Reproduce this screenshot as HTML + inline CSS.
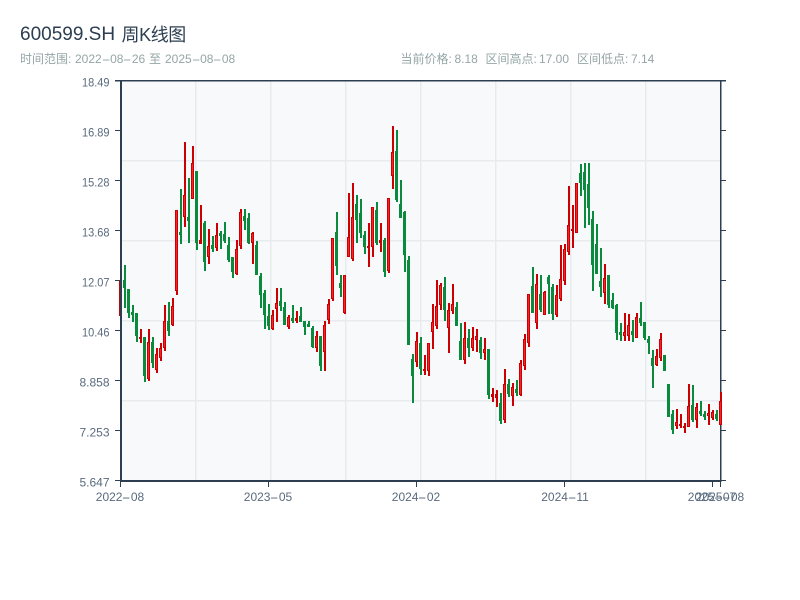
<!DOCTYPE html>
<html lang="zh">
<head>
<meta charset="utf-8">
<title>600599.SH 周K线图</title>
<style>
html,body{margin:0;padding:0;background:#fff;}
body{width:800px;height:600px;overflow:hidden;position:relative;font-family:"Liberation Sans","WenQuanYi Zen Hei","Noto Sans CJK SC",sans-serif;}
.t{position:absolute;white-space:pre;line-height:1;}
.h{top:25px;color:#2c3e50;}
.s{top:53px;font-size:12px;color:#95a5a6;}
.x{top:491px;width:80px;text-align:center;font-size:12px;color:#5a6a7e;}
i{font-style:normal;display:inline-block;width:8.4px;text-align:center;transform:scaleX(2.2);}
svg{position:absolute;left:0;top:0;}
svg text{font-family:"Liberation Sans","WenQuanYi Zen Hei","Noto Sans CJK SC",sans-serif;font-size:12px;fill:#5a6a7e;}
</style>
</head>
<body>
<div class="t h" style="left:20px;font-size:19px">600599.SH</div>
<div class="t h" style="left:121.5px;font-size:18px;top:26px;letter-spacing:-.4px">周K线图</div>
<div class="t s" style="left:20px">时间范围:</div>
<div class="t s" style="left:75px">2022<i>-</i>08<i>-</i>26</div>
<div class="t s" style="left:149px">至</div>
<div class="t s" style="left:165px">2025<i>-</i>08<i>-</i>08</div>
<div class="t s" style="left:400.5px">当前价格:</div>
<div class="t s" style="left:454.5px">8.18</div>
<div class="t s" style="left:485.5px">区间高点:</div>
<div class="t s" style="left:539px">17.00</div>
<div class="t s" style="left:577px">区间低点:</div>
<div class="t s" style="left:631px">7.14</div>
<svg width="800" height="600" viewBox="0 0 800 600">
<rect x="120" y="80" width="600" height="400" fill="#f8f9fb"/>
<path fill="#e7eaee" d="M195 81h1.5V480h-1.5zM270 81h1.5V480h-1.5zM345 81h1.5V480h-1.5zM420 81h1.5V480h-1.5zM495 81h1.5V480h-1.5zM570 81h1.5V480h-1.5zM645 81h1.5V480h-1.5zM122 160h598v1.5H122zM122 240h598v1.5H122zM122 320h598v1.5H122zM122 400h598v1.5H122z"/>
<g shape-rendering="crispEdges">
<path fill="#2c3e50" d="M115 80h611v1.5H115zM720 80h1.5V482H720zM721 130h5v1h-5zM721 180h5v1h-5zM721 230h5v1h-5zM721 280h5v1h-5zM721 330h5v1h-5zM721 380h5v1h-5zM721 430h5v1h-5zM721 480h5v1h-5z"/>
<path fill="#0a8a3c" d="M124 265h2V308h-2zM123 280h3V288h-3zM128 289h2V318h-2zM127 289h3V313h-3zM132 305h2V322h-2zM131 312h3V315h-3zM136 313h2V342h-2zM135 313h3V336h-3zM144 337h2V382h-2zM143 337h3V376h-3zM152 337h2V368h-2zM151 342h3V363h-3zM168 302h2V336h-2zM167 321h3V331h-3zM180 189h2V244h-2zM179 232h3V235h-3zM188 178h2V243h-2zM187 217h3V221h-3zM196 171h2V250h-2zM195 171h3V243h-3zM204 221h2V271h-2zM203 223h3V262h-3zM212 236h2V252h-2zM211 245h3V249h-3zM220 231h2V249h-2zM219 233h3V236h-3zM224 222h2V243h-2zM223 234h3V241h-3zM228 237h2V262h-2zM227 245h3V260h-3zM232 257h2V278h-2zM231 257h3V272h-3zM244 209h2V230h-2zM243 216h3V221h-3zM248 213h2V244h-2zM247 218h3V243h-3zM256 241h2V275h-2zM255 245h3V275h-3zM260 273h2V308h-2zM259 276h3V295h-3zM264 290h2V329h-2zM263 293h3V315h-3zM268 304h2V330h-2zM267 316h3V326h-3zM280 288h2V311h-2zM279 301h3V306h-3zM284 302h2V325h-2zM283 307h3V325h-3zM292 305h2V323h-2zM291 318h3V321h-3zM300 307h2V322h-2zM299 316h3V322h-3zM304 321h2V335h-2zM303 321h3V327h-3zM308 321h2V327h-2zM307 324h3V327h-3zM312 326h2V348h-2zM311 328h3V347h-3zM320 336h2V371h-2zM319 336h3V366h-3zM336 212h2V275h-2zM335 232h3V266h-3zM340 275h2V297h-2zM339 283h3V288h-3zM356 195h2V243h-2zM355 204h3V220h-3zM360 199h2V238h-2zM359 213h3V233h-3zM364 231h2V254h-2zM363 235h3V247h-3zM376 202h2V245h-2zM375 210h3V243h-3zM384 238h2V277h-2zM383 240h3V272h-3zM396 130h2V202h-2zM395 151h3V200h-3zM400 180h2V218h-2zM399 204h3V218h-3zM404 211h2V272h-2zM403 212h3V255h-3zM408 256h2V345h-2zM407 260h3V345h-3zM412 354h2V403h-2zM411 359h3V376h-3zM420 337h2V375h-2zM419 343h3V369h-3zM444 277h2V321h-2zM443 287h3V310h-3zM456 302h2V326h-2zM455 307h3V326h-3zM460 323h2V360h-2zM459 341h3V360h-3zM468 329h2V357h-2zM467 338h3V348h-3zM480 337h2V359h-2zM479 340h3V353h-3zM488 349h2V399h-2zM487 349h3V395h-3zM500 393h2V424h-2zM499 403h3V421h-3zM508 379h2V397h-2zM507 384h3V394h-3zM516 380h2V396h-2zM515 389h3V393h-3zM532 267h2V313h-2zM531 286h3V313h-3zM540 275h2V312h-2zM539 294h3V310h-3zM548 275h2V314h-2zM547 277h3V284h-3zM552 284h2V320h-2zM551 287h3V314h-3zM580 164h2V196h-2zM579 173h3V183h-3zM584 163h2V228h-2zM583 172h3V190h-3zM588 163h2V225h-2zM587 184h3V208h-3zM592 211h2V291h-2zM591 219h3V265h-3zM596 224h2V274h-2zM595 244h3V274h-3zM600 248h2V297h-2zM599 281h3V287h-3zM608 275h2V308h-2zM607 275h3V305h-3zM612 293h2V309h-2zM611 300h3V308h-3zM616 304h2V340h-2zM615 305h3V333h-3zM620 323h2V341h-2zM619 332h3V335h-3zM632 320h2V342h-2zM631 331h3V335h-3zM640 302h2V326h-2zM639 318h3V323h-3zM644 322h2V340h-2zM643 322h3V338h-3zM648 336h2V354h-2zM647 339h3V343h-3zM652 350h2V388h-2zM651 358h3V366h-3zM664 355h2V371h-2zM663 355h3V371h-3zM668 384h2V417h-2zM667 384h3V417h-3zM672 410h2V434h-2zM671 414h3V430h-3zM692 385h2V422h-2zM691 405h3V420h-3zM700 401h2V416h-2zM699 411h3V414h-3zM704 411h2V420h-2zM703 414h3V417h-3zM716 410h2V421h-2zM715 414h3V419h-3z"/>
<path fill="#cc0000" d="M120 280h2V316h-2zM119 280h3V316h-3zM140 329h2V343h-2zM139 337h3V339h-3zM148 329h2V381h-2zM147 342h3V379h-3zM156 348h2V373h-2zM155 354h3V370h-3zM160 343h2V361h-2zM159 348h3V358h-3zM164 305h2V351h-2zM163 321h3V348h-3zM172 298h2V326h-2zM171 306h3V325h-3zM176 210h2V295h-2zM175 210h3V291h-3zM184 142h2V227h-2zM183 195h3V217h-3zM192 146h2V199h-2zM191 163h3V199h-3zM200 205h2V244h-2zM199 240h3V244h-3zM208 229h2V264h-2zM207 246h3V257h-3zM216 223h2V251h-2zM215 235h3V248h-3zM236 240h2V275h-2zM235 249h3V274h-3zM240 209h2V249h-2zM239 212h3V246h-3zM252 232h2V264h-2zM251 233h3V243h-3zM272 310h2V330h-2zM271 315h3V329h-3zM276 288h2V322h-2zM275 303h3V309h-3zM288 315h2V329h-2zM287 317h3V327h-3zM296 311h2V323h-2zM295 318h3V321h-3zM316 331h2V352h-2zM315 336h3V348h-3zM324 321h2V371h-2zM323 325h3V352h-3zM328 299h2V324h-2zM327 304h3V320h-3zM332 238h2V301h-2zM331 238h3V299h-3zM344 275h2V314h-2zM343 275h3V313h-3zM348 193h2V257h-2zM347 237h3V257h-3zM352 183h2V261h-2zM351 217h3V259h-3zM368 223h2V267h-2zM367 246h3V248h-3zM372 207h2V257h-2zM371 207h3V247h-3zM380 223h2V252h-2zM379 240h3V243h-3zM388 198h2V273h-2zM387 198h3V271h-3zM392 126h2V189h-2zM391 152h3V176h-3zM416 332h2V367h-2zM415 341h3V362h-3zM424 355h2V375h-2zM423 369h3V371h-3zM428 343h2V376h-2zM427 343h3V371h-3zM432 304h2V349h-2zM431 322h3V332h-3zM436 280h2V329h-2zM435 306h3V326h-3zM440 283h2V310h-2zM439 285h3V305h-3zM448 303h2V353h-2zM447 310h3V328h-3zM452 284h2V314h-2zM451 304h3V311h-3zM464 322h2V364h-2zM463 338h3V360h-3zM472 327h2V351h-2zM471 338h3V348h-3zM476 329h2V352h-2zM475 336h3V340h-3zM484 338h2V360h-2zM483 349h3V353h-3zM492 388h2V402h-2zM491 394h3V397h-3zM496 390h2V407h-2zM495 394h3V398h-3zM504 369h2V423h-2zM503 384h3V420h-3zM512 383h2V406h-2zM511 387h3V396h-3zM520 360h2V396h-2zM519 363h3V395h-3zM524 334h2V370h-2zM523 339h3V366h-3zM528 294h2V347h-2zM527 294h3V343h-3zM536 274h2V329h-2zM535 284h3V323h-3zM544 291h2V315h-2zM543 292h3V315h-3zM556 285h2V317h-2zM555 295h3V315h-3zM560 245h2V301h-2zM559 279h3V299h-3zM564 244h2V285h-2zM563 249h3V281h-3zM568 186h2V255h-2zM567 225h3V252h-3zM572 205h2V248h-2zM571 229h3V231h-3zM576 183h2V233h-2zM575 183h3V233h-3zM604 264h2V304h-2zM603 278h3V293h-3zM624 313h2V341h-2zM623 332h3V336h-3zM628 314h2V341h-2zM627 325h3V336h-3zM636 313h2V338h-2zM635 317h3V338h-3zM656 349h2V366h-2zM655 356h3V365h-3zM660 333h2V361h-2zM659 339h3V358h-3zM676 409h2V429h-2zM675 422h3V426h-3zM680 414h2V428h-2zM679 424h3V426h-3zM684 423h2V433h-2zM683 426h3V428h-3zM688 384h2V427h-2zM687 406h3V427h-3zM696 403h2V428h-2zM695 407h3V420h-3zM708 404h2V425h-2zM707 413h3V416h-3zM712 410h2V420h-2zM711 412h3V418h-3zM720 392h2V425h-2zM719 401h3V425h-3z"/>
<path fill="#f5232b" d="M176 211h1V290h-1zM148 343h1V378h-1zM156 355h1V369h-1zM160 349h1V357h-1zM164 322h1V347h-1zM172 307h1V324h-1zM184 196h1V216h-1zM192 164h1V198h-1zM208 247h1V256h-1zM216 236h1V247h-1zM236 250h1V273h-1zM240 213h1V245h-1zM252 234h1V242h-1zM272 316h1V328h-1zM276 304h1V308h-1zM288 318h1V326h-1zM316 337h1V347h-1zM324 326h1V351h-1zM328 305h1V319h-1zM332 239h1V298h-1zM344 276h1V312h-1zM348 238h1V256h-1zM352 218h1V258h-1zM372 208h1V246h-1zM388 199h1V270h-1zM392 153h1V175h-1zM416 342h1V361h-1zM428 344h1V370h-1zM432 323h1V331h-1zM436 307h1V325h-1zM440 286h1V304h-1zM448 311h1V327h-1zM452 305h1V310h-1zM464 339h1V359h-1zM472 339h1V347h-1zM476 337h1V339h-1zM484 350h1V352h-1zM504 385h1V419h-1zM512 388h1V395h-1zM520 364h1V394h-1zM524 340h1V365h-1zM528 295h1V342h-1zM536 285h1V322h-1zM544 293h1V314h-1zM556 296h1V314h-1zM560 280h1V298h-1zM564 250h1V280h-1zM568 226h1V251h-1zM576 184h1V232h-1zM604 279h1V292h-1zM624 333h1V335h-1zM628 326h1V335h-1zM636 318h1V337h-1zM656 357h1V364h-1zM660 340h1V357h-1zM676 423h1V425h-1zM688 407h1V426h-1zM696 408h1V419h-1zM708 414h1V415h-1zM712 413h1V417h-1zM720 402h1V424h-1z"/>
<path fill="#2c3e50" d="M120 80h2V482h-2zM120 480h601v2H120zM115 130h5v1h-5zM115 180h5v1h-5zM115 230h5v1h-5zM115 280h5v1h-5zM115 330h5v1h-5zM115 380h5v1h-5zM115 430h5v1h-5zM115 480h5v1h-5zM120 482h1v5h-1zM268 482h1v5h-1zM416 482h1v5h-1zM564 482h1v5h-1zM712 482h1v5h-1zM720 482h1v5h-1z"/>
</g>
<text x="82" y="86.5" textLength="27.5" lengthAdjust="spacingAndGlyphs">18.49</text>
<text x="82" y="136.5" textLength="27.5" lengthAdjust="spacingAndGlyphs">16.89</text>
<text x="82" y="186.5" textLength="27.5" lengthAdjust="spacingAndGlyphs">15.28</text>
<text x="82" y="236.5" textLength="27.5" lengthAdjust="spacingAndGlyphs">13.68</text>
<text x="82" y="286.5" textLength="27.5" lengthAdjust="spacingAndGlyphs">12.07</text>
<text x="82" y="336.5" textLength="27.5" lengthAdjust="spacingAndGlyphs">10.46</text>
<g text-anchor="end">
<text x="109.5" y="386.5">8.858</text>
<text x="109.5" y="436.5">7.253</text>
<text x="109.5" y="486.5">5.647</text>
</g>
</svg>
<div class="t x" style="left:80px">2022<i>-</i>08</div>
<div class="t x" style="left:228px">2023<i>-</i>05</div>
<div class="t x" style="left:376px">2024<i>-</i>02</div>
<div class="t x" style="left:525px">2024<i>-</i>11</div>
<div class="t x" style="left:672px">2025<i>-</i>07</div>
<div class="t x" style="left:680px">2025<i>-</i>08</div>
</body>
</html>
